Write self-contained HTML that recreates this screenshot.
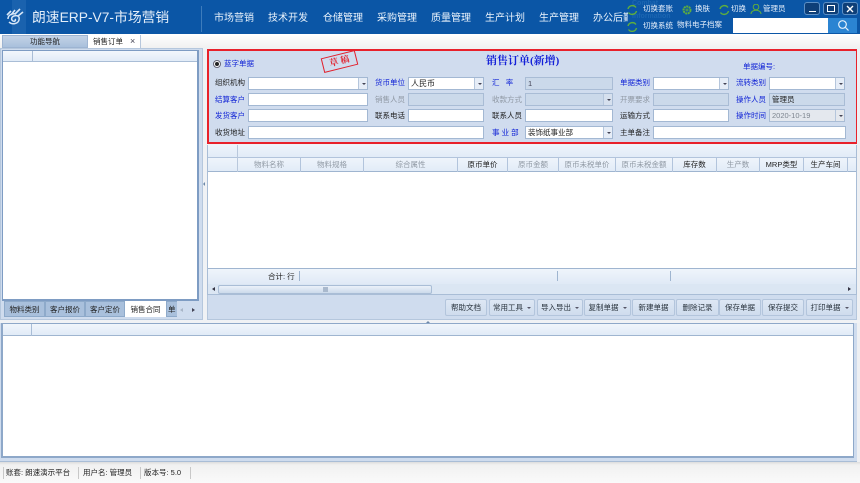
<!DOCTYPE html>
<html lang="zh"><head><meta charset="utf-8"><title>销售订单</title>
<style>
html,body{margin:0;padding:0;width:860px;height:483px;overflow:hidden;background:#fff}
body{position:relative;font-family:"Liberation Sans","Noto Sans CJK SC",sans-serif;font-size:7.5px;color:#222;filter:blur(.3px)}
div,span,svg{position:absolute;box-sizing:border-box}
.t{white-space:nowrap;line-height:12px;height:12px}
.n{top:12px;color:#eaf3fc;font-size:10px;white-space:nowrap;line-height:13px}
.w{color:#e6effb;font-size:7.500px;white-space:nowrap;line-height:10px}
.l{white-space:nowrap;line-height:12px;color:#222}
.b{color:#1225d6}
.g{color:#9099a4}
.f{background:#fff;border:1px solid #a3b8d3;height:13px;line-height:11px;padding-left:2px;color:#222;white-space:nowrap}
.d{background:#cbd9ea;border:1px solid #a9bcd5}
.a{right:0;top:0;bottom:0;width:9px;background:#e6edf7;border-left:1px solid #b5c6dc}
.a:after{content:"";position:absolute;left:2.500px;top:4.500px;border:2px solid transparent;border-top:2px solid #445}
.h{top:158px;height:14px;line-height:14px;text-align:center;white-space:nowrap;border-right:1px solid #b2c4dc}
.tb{top:301px;height:16px;line-height:16px;text-align:center;background:#a9c0dc;border:1px solid #8eaaca;white-space:nowrap}
.bt{top:299px;height:17px;line-height:15px;text-align:center;background:linear-gradient(#dde7f4,#cfdced);border:1px solid #b3c5dc;border-radius:2px;white-space:nowrap;color:#2a343e}
.car{display:inline-block;position:static;border:2px solid transparent;border-top:2px solid #556;margin-left:4px;vertical-align:-1px}
.win{top:2px;width:16px;height:13px;border:1px solid #5d8fc4;border-radius:3px;background:#0e3f78}
.sep{background:#b9c8dc;width:1px}
</style></head><body>

<!-- header -->
<div style="left:0;top:0;width:860px;height:34px;background:#0b56a6"></div>
<div style="left:12px;top:0;width:14px;height:34px;background:#1a62ae"></div>
<svg style="left:5px;top:8px" width="20" height="18" viewBox="0 0 20 18" fill="none" stroke="#d6e6f7">
<path d="M3 11c0-4 4-6 8-5M4 14c3 3 9 2 10-2s-2-5-5-4-3 4-1 5 3-1 2-2" stroke-width="1.500"/>
<path d="M2 7 6 3M6 7l4-5M10 6l5-5M13 8l5-4" stroke-width="1.600"/></svg>
<div style="left:32px;top:9px;color:#e4eef9;font-size:13.800px;line-height:18px;white-space:nowrap">朗速ERP-V7-市场营销</div>
<div style="left:201px;top:6px;width:1px;height:26px;background:#3d7cbc"></div>
<div class="n" style="left:214px">市场营销</div>
<div class="n" style="left:268px">技术开发</div>
<div class="n" style="left:323px">仓储管理</div>
<div class="n" style="left:377px">采购管理</div>
<div class="n" style="left:431px">质量管理</div>
<div class="n" style="left:485px">生产计划</div>
<div class="n" style="left:539px">生产管理</div>
<div style="left:593px;top:12px;width:35px;height:13px;overflow:hidden;color:#eaf3fc;font-size:10px;line-height:13px;white-space:nowrap">办公后勤</div>

<div style="left:632px;top:0;color:#1c66b2;font-size:7px;font-weight:bold;line-height:7px;white-space:nowrap">Combat</div>
<div style="left:632px;top:13px;color:#1c66b2;font-size:7px;font-weight:bold;line-height:7px;white-space:nowrap">Information</div>

<svg style="left:627px;top:4px" width="160" height="28" fill="none" stroke="#5fae3d" stroke-width="1.400">
<path d="M1 5a4.500 4.500 0 0 1 8-1.500M9.500 7a4.500 4.500 0 0 1-8 1.500"/>
<path d="M1 22a4.500 4.500 0 0 1 8-1.500M9.500 24a4.500 4.500 0 0 1-8 1.500"/>
<circle cx="60" cy="6" r="3.500" stroke-width="2" stroke-dasharray="2 .6"/><circle cx="60" cy="6" r="1" stroke-width=".8"/>
<path d="M93 5a4.500 4.500 0 0 1 8-1.500M101.500 7a4.500 4.500 0 0 1-8 1.500"/>
<circle cx="129" cy="3" r="2.800" stroke-width="1"/><path d="M124 10c0-5 10-5 10 0" stroke-width="1"/>
</svg>
<div class="w" style="left:643px;top:4px">切换套账</div>
<div class="w" style="left:695px;top:4px">换肤</div>
<div class="w" style="left:731px;top:4px">切换</div>
<div class="w" style="left:763px;top:4px">管理员</div>
<div class="w" style="left:643px;top:21px">切换系统</div>
<div class="w" style="left:677px;top:20px">物料电子档案</div>

<div class="win" style="left:804px"><span style="left:4px;top:8px;width:7px;height:1px;background:#fff"></span></div>
<div class="win" style="left:823px"><span style="left:3px;top:2px;width:8px;height:7px;border:1px solid #fff"></span></div>
<div class="win" style="left:842px"><svg style="left:3px;top:2px" width="9" height="8" stroke="#fff" stroke-width="1.400"><path d="M1 1l6 6M7 1 1 7"/></svg></div>

<div style="left:733px;top:18px;width:95px;height:15px;background:#fff"></div>
<div style="left:828px;top:18px;width:29px;height:15px;background:#2b84d2"></div>
<svg style="left:837px;top:19px" width="13" height="13" fill="none" stroke="#e6f1fb" stroke-width="1.200"><circle cx="5.500" cy="5.500" r="3.800"/><path d="M8.500 8.500l3 3"/></svg>

<!-- tab bar -->
<div style="left:0;top:34px;width:860px;height:14px;background:linear-gradient(#fff,#f0f0f0)"></div>
<div style="left:2px;top:35px;width:86px;height:13px;background:linear-gradient(#c3d2e6,#a9c0dc);border:1px solid #9db4d2;text-align:center;line-height:12px;font-size:7.500px;color:#222">功能导航</div>
<div style="left:88px;top:35px;width:53px;height:13px;background:#fff;border-right:1px solid #b7c7dc"></div>
<div class="l" style="left:93px;top:36px">销售订单</div>
<div style="left:130px;top:36px;font-size:9px;line-height:11px;color:#445">×</div>

<!-- left panel -->
<div style="left:0;top:48px;width:203px;height:272px;background:#cfdcee;border:1px solid #b5c7dd"></div>
<div style="left:2px;top:50px;width:197px;height:251px;background:#fff;border:1px solid #7e9cc3;border-width:1px 2px 2px 1px"></div>
<div style="left:3px;top:51px;width:194px;height:11px;background:linear-gradient(#f3f7fc,#e1ebf7);border-bottom:1px solid #a9bdd6"></div>
<div style="left:32px;top:51px;width:1px;height:11px;background:#a9bdd6"></div>
<div class="tb" style="left:4px;width:41px">物料类别</div>
<div class="tb" style="left:45px;width:40px">客户报价</div>
<div class="tb" style="left:85px;width:40px">客户定价</div>
<div class="tb" style="left:125px;width:41px;background:#fff;border-color:#fff">销售合同</div>
<div class="tb" style="left:166px;width:11px;overflow:hidden;text-align:left;padding-left:1px;border-right:0">单</div>
<div style="left:177px;top:301px;width:24px;height:16px;background:#cfdcee"></div>
<div style="left:180px;top:308px;border:2px solid transparent;border-right:3px solid #a8b5c6;border-left:0"></div>
<div style="left:192px;top:308px;border:2px solid transparent;border-left:3px solid #445;border-right:0"></div>

<!-- splitter -->
<div style="left:203px;top:48px;width:4px;height:272px;background:#f0f2f5"></div>
<div style="left:203px;top:182px;border:2px solid transparent;border-right:2px solid #6c87a8;border-left:0"></div>

<!-- form -->
<div style="left:207px;top:48px;width:653px;height:97px;background:#f0f2f5"></div>
<div style="left:207px;top:49px;width:651px;height:95px;background:#d0dcee;border:2px solid #e8212b"></div>

<div style="left:213px;top:60px;width:8px;height:8px;border:1px solid #667;border-radius:50%;background:#fff"></div>
<div style="left:215px;top:62px;width:4px;height:4px;border-radius:50%;background:#222"></div>
<div class="l b" style="left:224px;top:58px">蓝字单据</div>
<div style="left:322px;top:54px;width:35px;height:15px;border:1.500px solid #e2202c;transform:rotate(-14deg);color:#e2202c;font-size:9px;line-height:12px;text-align:center;font-family:'Liberation Serif','Noto Serif CJK SC',serif;font-weight:bold;white-space:nowrap">草&nbsp;稿</div>
<div style="left:486px;top:54px;font-size:11px;line-height:15px;font-weight:bold;color:#1420d8;white-space:nowrap;font-family:'Liberation Serif','Noto Serif CJK SC',serif">销售订单(新增)</div>
<div class="l b" style="left:743px;top:61px">单据编号:</div>

<!-- row 1 -->
<div class="l" style="left:215px;top:77px">组织机构</div>
<div class="f" style="left:248px;top:77px;width:120px"><span class="a"></span></div>
<div class="l b" style="left:375px;top:77px">货币单位</div>
<div class="f" style="left:408px;top:77px;width:76px;font-size:8px">人民币<span class="a"></span></div>
<div class="l b" style="left:492px;top:77px;word-spacing:0">汇&nbsp;&nbsp;&nbsp;率</div>
<div class="f d" style="left:525px;top:77px;width:88px;color:#445">1</div>
<div class="l b" style="left:620px;top:77px">单据类别</div>
<div class="f" style="left:653px;top:77px;width:76px"><span class="a"></span></div>
<div class="l b" style="left:736px;top:77px">流转类别</div>
<div class="f" style="left:769px;top:77px;width:76px"><span class="a"></span></div>
<!-- row 2 -->
<div class="l b" style="left:215px;top:94px">结算客户</div>
<div class="f" style="left:248px;top:93px;width:120px"></div>
<div class="l g" style="left:375px;top:94px">销售人员</div>
<div class="f d" style="left:408px;top:93px;width:76px"></div>
<div class="l g" style="left:492px;top:94px">收款方式</div>
<div class="f d" style="left:525px;top:93px;width:88px"><span class="a" style="background:#d6e0ee"></span></div>
<div class="l g" style="left:620px;top:94px">开票要求</div>
<div class="f d" style="left:653px;top:93px;width:76px"></div>
<div class="l b" style="left:736px;top:94px">操作人员</div>
<div class="f d" style="left:769px;top:93px;width:76px;font-size:7.500px">管理员</div>
<!-- row 3 -->
<div class="l b" style="left:215px;top:110px">发货客户</div>
<div class="f" style="left:248px;top:109px;width:120px"></div>
<div class="l" style="left:375px;top:110px">联系电话</div>
<div class="f" style="left:408px;top:109px;width:76px"></div>
<div class="l" style="left:492px;top:110px">联系人员</div>
<div class="f" style="left:525px;top:109px;width:88px"></div>
<div class="l" style="left:620px;top:110px">运输方式</div>
<div class="f" style="left:653px;top:109px;width:76px"></div>
<div class="l b" style="left:736px;top:110px">操作时间</div>
<div class="f d" style="left:769px;top:109px;width:76px;background:#e4e8ee;color:#7d858f">2020-10-19<span class="a" style="background:#e4e8ee"></span></div>
<!-- row 4 -->
<div class="l" style="left:215px;top:127px">收货地址</div>
<div class="f" style="left:248px;top:126px;width:236px"></div>
<div class="l b" style="left:492px;top:127px">事&nbsp;业&nbsp;部</div>
<div class="f" style="left:525px;top:126px;width:88px">装饰纸事业部<span class="a"></span></div>
<div class="l" style="left:620px;top:127px">主单备注</div>
<div class="f" style="left:653px;top:126px;width:193px"></div>

<!-- grid -->
<div style="left:207px;top:145px;width:650px;height:150px;background:#fff;border-left:1px solid #a9bdd6;border-right:1px solid #a9bdd6"></div>
<div style="left:208px;top:145px;width:648px;height:13px;background:linear-gradient(#eef4fb,#e1ebf7);border-bottom:1px solid #b2c4dc"></div>
<div style="left:208px;top:158px;width:648px;height:14px;background:linear-gradient(#eef4fb,#e1ebf7);border-bottom:1px solid #9fb5d0"></div>
<div class="sep" style="left:237px;top:145px;height:27px"></div>
<div class="h g" style="left:238px;width:63px">物料名称</div>
<div class="h g" style="left:301px;width:63px">物料规格</div>
<div class="h g" style="left:364px;width:94px">综合属性</div>
<div class="h" style="left:458px;width:50px">原币单价</div>
<div class="h g" style="left:508px;width:51px">原币金额</div>
<div class="h g" style="left:559px;width:57px">原币未税单价</div>
<div class="h g" style="left:616px;width:57px">原币未税金额</div>
<div class="h" style="left:673px;width:44px">库存数</div>
<div class="h g" style="left:717px;width:43px">生产数</div>
<div class="h" style="left:760px;width:44px">MRP类型</div>
<div class="h" style="left:804px;width:44px">生产车间</div>

<div style="left:208px;top:268px;width:648px;height:16px;background:linear-gradient(#eef4fb,#dfe9f6);border-top:1px solid #9fb5d0"></div>
<div class="l" style="left:268px;top:271px">合计: 行</div>
<div class="sep" style="left:299px;top:271px;height:10px;background:#9fb5d0"></div>
<div class="sep" style="left:557px;top:271px;height:10px;background:#9fb5d0"></div>
<div class="sep" style="left:670px;top:271px;height:10px;background:#9fb5d0"></div>

<div style="left:208px;top:284px;width:648px;height:11px;background:#dbe6f3;border-bottom:1px solid #a9bdd6"></div>
<div style="left:218px;top:285px;width:214px;height:9px;background:linear-gradient(#eaf1f9,#ccdaeb);border:1px solid #a9bdd6;border-radius:2px"></div>
<div style="left:323px;top:287px;width:5px;height:5px;background:#a9b9cd"></div>
<div style="left:212px;top:287px;border:2.500px solid transparent;border-right:3px solid #334;border-left:0"></div>
<div style="left:848px;top:287px;border:2.500px solid transparent;border-left:3px solid #334;border-right:0"></div>

<!-- toolbar -->
<div style="left:207px;top:295px;width:650px;height:25px;background:#cfdcee;border:1px solid #b5c7dd;border-top:0"></div>
<div class="bt" style="left:445px;width:42px">帮助文档</div>
<div class="bt" style="left:489px;width:46px">常用工具<span class="car"></span></div>
<div class="bt" style="left:537px;width:46px">导入导出<span class="car"></span></div>
<div class="bt" style="left:584px;width:47px">复制单据<span class="car"></span></div>
<div class="bt" style="left:632px;width:43px">新建单据</div>
<div class="bt" style="left:676px;width:43px">删除记录</div>
<div class="bt" style="left:719px;width:42px">保存单据</div>
<div class="bt" style="left:762px;width:42px">保存提交</div>
<div class="bt" style="left:806px;width:47px">打印单据<span class="car"></span></div>

<!-- right edge -->
<div style="left:857px;top:48px;width:3px;height:414px;background:#eef0f3"></div>

<!-- bottom -->
<div style="left:0;top:320px;width:860px;height:3px;background:#f0f2f5"></div>
<div style="left:426px;top:321px;border:2px solid transparent;border-bottom:2px solid #6c87a8;border-top:0"></div>
<div style="left:0;top:323px;width:857px;height:139px;background:#cfdcee;border-bottom:1px solid #a9bdd6"></div>
<div style="left:1px;top:323px;width:853px;height:135px;background:#fff;border:1px solid #8ea8c9;border-width:1px 1px 2px 2px"></div>
<div style="left:3px;top:324px;width:850px;height:12px;background:linear-gradient(#f0f5fb,#e1ebf7);border-bottom:1px solid #9fb5d0"></div>
<div style="left:31px;top:324px;width:1px;height:12px;background:#a9bdd6"></div>

<!-- status -->
<div style="left:0;top:462px;width:860px;height:21px;background:linear-gradient(#dcdcdc,#f1f1f1 14%,#fafafa)"></div>
<div class="sep" style="left:3px;top:467px;height:12px;background:#c8c8c8"></div>
<div class="l" style="left:6px;top:467px">账套: 朗速演示平台</div>
<div class="sep" style="left:78px;top:467px;height:12px;background:#c8c8c8"></div>
<div class="l" style="left:83px;top:467px">用户名: 管理员</div>
<div class="sep" style="left:140px;top:467px;height:12px;background:#c8c8c8"></div>
<div class="l" style="left:144px;top:467px">版本号: 5.0</div>
<div class="sep" style="left:190px;top:467px;height:12px;background:#c8c8c8"></div>
</body></html>
